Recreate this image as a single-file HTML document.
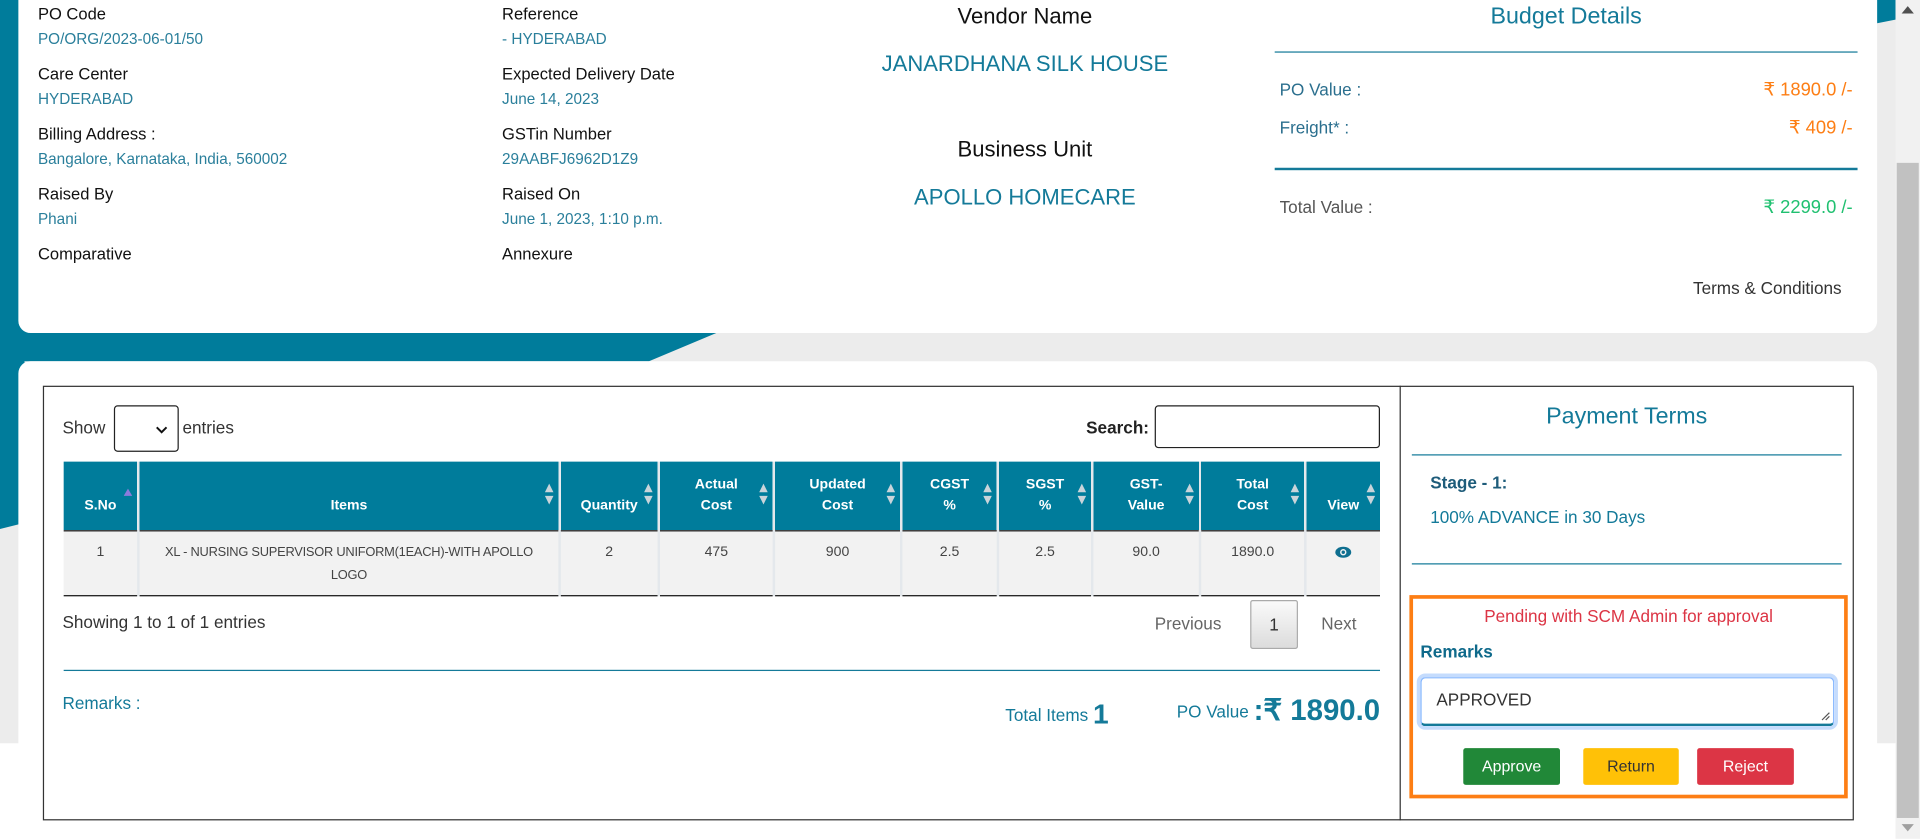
<!DOCTYPE html>
<html><head><meta charset="utf-8"><style>
*{box-sizing:border-box;margin:0;padding:0}
html,body{width:1920px;height:838px;overflow:hidden;background:#fff}
#w{position:absolute;left:0;top:0;width:1568px;height:685px;transform:scale(1.22449);transform-origin:0 0;font-family:"Liberation Sans",sans-serif;background:#fff}
.a{position:absolute;white-space:nowrap}
.lb{font-size:13.5px;color:#111}
.vl{font-size:12.5px;color:#2a7f9b}
.t{color:#147a99}
th{background:#007c9b;color:#fff;font-size:11.5px;font-weight:bold;border-right:2px solid #e4e8ec;position:relative;line-height:17px}
td{font-size:11.5px;color:#444;border-right:2px solid #e4e8ec;text-align:center;vertical-align:top;padding-top:8px;line-height:19px}
th:last-child,td:last-child{border-right:none}
.s{position:absolute;right:4px;top:17px;width:7px;height:20px}
.btn{position:absolute;top:611px;height:30px;font-size:13px;text-align:center;line-height:30px;border-radius:2px}
</style></head><body><div id="w">
<div class="a" style="left:0;top:0;width:1548px;height:607px;background:#ececec"></div>
<svg class="a" style="left:0;top:0" width="1548" height="440"><polygon points="0,0 20,0 20,270 585,272 530,295 20,295 20,427 0,432" fill="#007c9b"/><polygon points="1530,0 1548,0 1548,16 1533,19" fill="#007c9b"/></svg>
<div class="a" style="left:15px;top:0;width:1518px;height:272px;background:#fff;border-radius:0 0 10px 10px"></div>
<div class="a" style="left:15px;top:295px;width:1518px;height:390px;background:#fff;border-radius:10px 10px 0 0"></div>
<div class="a" style="left:1548px;top:0;width:20px;height:685px;background:#f1f1f1"></div>
<div class="a" style="left:1549px;top:133px;width:18px;height:535px;background:#c1c1c1"></div>
<div class="a" style="left:1553px;top:5px;width:0;height:0;border:5px solid transparent;border-bottom:6px solid #505050;border-top:none"></div>
<div class="a" style="left:1553px;top:673px;width:0;height:0;border:5px solid transparent;border-top:6px solid #a0a0a0;border-bottom:none"></div>

<div class="a lb" style="left:31px;top:4px">PO Code</div><div class="a vl" style="left:31px;top:25px">PO/ORG/2023-06-01/50</div>
<div class="a lb" style="left:31px;top:53px">Care Center</div><div class="a vl" style="left:31px;top:74px">HYDERABAD</div>
<div class="a lb" style="left:31px;top:102px">Billing Address :</div><div class="a vl" style="left:31px;top:123px">Bangalore, Karnataka, India, 560002</div>
<div class="a lb" style="left:31px;top:151px">Raised By</div><div class="a vl" style="left:31px;top:172px">Phani</div>
<div class="a lb" style="left:31px;top:200px">Comparative</div>
<div class="a lb" style="left:410px;top:4px">Reference</div><div class="a vl" style="left:410px;top:25px">- HYDERABAD</div>
<div class="a lb" style="left:410px;top:53px">Expected Delivery Date</div><div class="a vl" style="left:410px;top:74px">June 14, 2023</div>
<div class="a lb" style="left:410px;top:102px">GSTin Number</div><div class="a vl" style="left:410px;top:123px">29AABFJ6962D1Z9</div>
<div class="a lb" style="left:410px;top:151px">Raised On</div><div class="a vl" style="left:410px;top:172px">June 1, 2023, 1:10 p.m.</div>
<div class="a lb" style="left:410px;top:200px">Annexure</div>
<div class="a" style="left:637px;width:400px;text-align:center;top:3px;font-size:18px;color:#111">Vendor Name</div>
<div class="a t" style="left:637px;width:400px;text-align:center;top:42px;font-size:18px">JANARDHANA SILK HOUSE</div>
<div class="a" style="left:637px;width:400px;text-align:center;top:112px;font-size:18px;color:#111">Business Unit</div>
<div class="a t" style="left:637px;width:400px;text-align:center;top:151px;font-size:18px">APOLLO HOMECARE</div>
<div class="a t" style="left:1041px;width:476px;text-align:center;top:3px;font-size:19px">Budget Details</div>
<div class="a" style="left:1041px;top:42px;width:476px;height:1px;background:#147a99"></div>
<div class="a" style="left:1045px;top:65px;font-size:14px;color:#2b6f8e">PO Value :</div><div class="a" style="right:55px;top:64px;font-size:15px;color:#fd7e14">₹ 1890.0 /-</div>
<div class="a" style="left:1045px;top:96px;font-size:14px;color:#2b6f8e">Freight* :</div><div class="a" style="right:55px;top:95px;font-size:15px;color:#fd7e14">₹ 409 /-</div>
<div class="a" style="left:1041px;top:137px;width:476px;height:2px;background:#147a99"></div>
<div class="a" style="left:1045px;top:161px;font-size:14px;color:#555">Total Value :</div><div class="a" style="right:55px;top:160px;font-size:15px;color:#20c070">₹ 2299.0 /-</div>
<div class="a" style="right:64px;top:227px;font-size:14px;color:#333">Terms &amp; Conditions</div>

<div class="a" style="left:35px;top:315px;width:1479px;height:355px;border:1px solid #333"></div>
<div class="a" style="left:1143px;top:315px;width:1px;height:355px;background:#333"></div>
<div class="a" style="left:51px;top:341px;font-size:14px;color:#333">Show</div>
<div class="a" style="left:93px;top:331px;width:53px;height:38px;border:1px solid #222;border-radius:3px"><svg style="position:absolute;left:33px;top:15px" width="10" height="8"><path d="M1 2 L5 6 L9 2" stroke="#111" stroke-width="1.6" fill="none"/></svg></div>
<div class="a" style="left:149px;top:341px;font-size:14px;color:#333">entries</div>
<div class="a" style="left:887px;top:341px;font-size:14px;font-weight:bold;color:#222">Search:</div>
<div class="a" style="left:943px;top:331px;width:184px;height:35px;border:1px solid #222;border-radius:3px"></div>
<table class="a" style="left:52px;top:377px;width:1075px;border-collapse:collapse;table-layout:fixed;white-space:normal">
<colgroup><col style="width:61px"><col style="width:344px"><col style="width:81px"><col style="width:94px"><col style="width:104px"><col style="width:79px"><col style="width:77px"><col style="width:88px"><col style="width:86px"><col style="width:61px"></colgroup>
<tr style="height:56px;border-bottom:1px solid #111">
<th style="padding-top:18px">S.No<svg class="s" style="top:20px"><path d="M0 8 L3.5 2 L7 8Z" fill="#8c7bdc"/></svg></th>
<th style="padding-top:18px">Items<svg class="s"><path d="M0 8 L3.5 1 L7 8Z M0 11 L3.5 18 L7 11Z" fill="#c9d4da"/></svg></th>
<th style="padding-top:18px">Quantity<svg class="s"><path d="M0 8 L3.5 1 L7 8Z M0 11 L3.5 18 L7 11Z" fill="#c9d4da"/></svg></th>
<th>Actual<br>Cost<svg class="s"><path d="M0 8 L3.5 1 L7 8Z M0 11 L3.5 18 L7 11Z" fill="#c9d4da"/></svg></th>
<th>Updated<br>Cost<svg class="s"><path d="M0 8 L3.5 1 L7 8Z M0 11 L3.5 18 L7 11Z" fill="#c9d4da"/></svg></th>
<th>CGST<br>%<svg class="s"><path d="M0 8 L3.5 1 L7 8Z M0 11 L3.5 18 L7 11Z" fill="#c9d4da"/></svg></th>
<th>SGST<br>%<svg class="s"><path d="M0 8 L3.5 1 L7 8Z M0 11 L3.5 18 L7 11Z" fill="#c9d4da"/></svg></th>
<th>GST-<br>Value<svg class="s"><path d="M0 8 L3.5 1 L7 8Z M0 11 L3.5 18 L7 11Z" fill="#c9d4da"/></svg></th>
<th>Total<br>Cost<svg class="s"><path d="M0 8 L3.5 1 L7 8Z M0 11 L3.5 18 L7 11Z" fill="#c9d4da"/></svg></th>
<th style="padding-top:18px">View<svg class="s"><path d="M0 8 L3.5 1 L7 8Z M0 11 L3.5 18 L7 11Z" fill="#c9d4da"/></svg></th></tr>
<tr style="height:53px;background:#f2f2f2;border-bottom:1px solid #111">
<td>1</td><td style="padding-left:2px;padding-right:2px;font-size:10.5px;letter-spacing:-0.2px;white-space:nowrap;overflow:hidden">XL - NURSING SUPERVISOR UNIFORM(1EACH)-WITH APOLLO<br>LOGO</td><td>2</td><td>475</td><td>900</td><td>2.5</td><td>2.5</td><td>90.0</td><td>1890.0</td>
<td><svg width="14" height="10" style="margin-top:4px"><ellipse cx="7" cy="5" rx="6.5" ry="4.5" fill="#0f6f90"/><circle cx="7" cy="5" r="2.6" fill="#f2f2f2"/><circle cx="7" cy="5" r="1.4" fill="#0f6f90"/></svg></td></tr>
</table>
<div class="a" style="left:51px;top:500px;font-size:14px;color:#333">Showing 1 to 1 of 1 entries</div>
<div class="a" style="left:943px;top:501px;font-size:14px;color:#666">Previous</div>
<div class="a" style="left:1021px;top:490px;width:39px;height:40px;border:1px solid #aaa;border-radius:2px;background:linear-gradient(#fafafa,#dcdcdc);text-align:center;line-height:38px;font-size:14px;color:#333">1</div>
<div class="a" style="left:1079px;top:501px;font-size:14px;color:#666">Next</div>
<div class="a" style="left:52px;top:547px;width:1075px;height:1px;background:#147a99"></div>
<div class="a t" style="left:51px;top:566px;font-size:14px">Remarks :</div>
<div class="a t" style="left:821px;top:570px;font-size:14px">Total Items <span style="font-size:23px;font-weight:bold;vertical-align:-2px">1</span></div>
<div class="a t" style="left:961px;top:566px;font-size:14px">PO Value <span style="font-size:24px;font-weight:bold;vertical-align:-2px">:₹ 1890.0</span></div>

<div class="a t" style="left:1153px;width:351px;text-align:center;top:330px;font-size:19px">Payment Terms</div>
<div class="a" style="left:1153px;top:371px;width:351px;height:1px;background:#147a99"></div>
<div class="a" style="left:1168px;top:386px;font-size:14px;font-weight:bold;color:#1e5c7a">Stage - 1:</div>
<div class="a t" style="left:1168px;top:414px;font-size:14px">100% ADVANCE in 30 Days</div>
<div class="a" style="left:1153px;top:460px;width:351px;height:1px;background:#147a99"></div>
<div class="a" style="left:1151px;top:486px;width:358px;height:166px;border:3px solid #fd7e14"></div>
<div class="a" style="left:1151px;width:358px;text-align:center;top:495px;font-size:14px;color:#dc3545">Pending with SCM Admin for approval</div>
<div class="a" style="left:1160px;top:524px;font-size:14px;font-weight:bold;color:#0f6a8b">Remarks</div>
<div class="a" style="left:1160px;top:553px;width:338px;height:40px;border:1px solid #86b7fe;border-bottom:2px solid #147a99;border-radius:4px;box-shadow:0 0 0 3px #c5dcfd;font-size:14px;color:#333;padding:9px 12px">APPROVED<svg style="position:absolute;right:2px;bottom:2px" width="8" height="8"><path d="M7 1 L1 7 M7 4 L4 7" stroke="#555" stroke-width="1"/></svg></div>
<div class="btn" style="left:1195px;width:79px;background:#218838;color:#fff">Approve</div>
<div class="btn" style="left:1293px;width:78px;background:#ffc107;color:#333">Return</div>
<div class="btn" style="left:1386px;width:79px;background:#dc3545;color:#fff">Reject</div>
</div></body></html>
